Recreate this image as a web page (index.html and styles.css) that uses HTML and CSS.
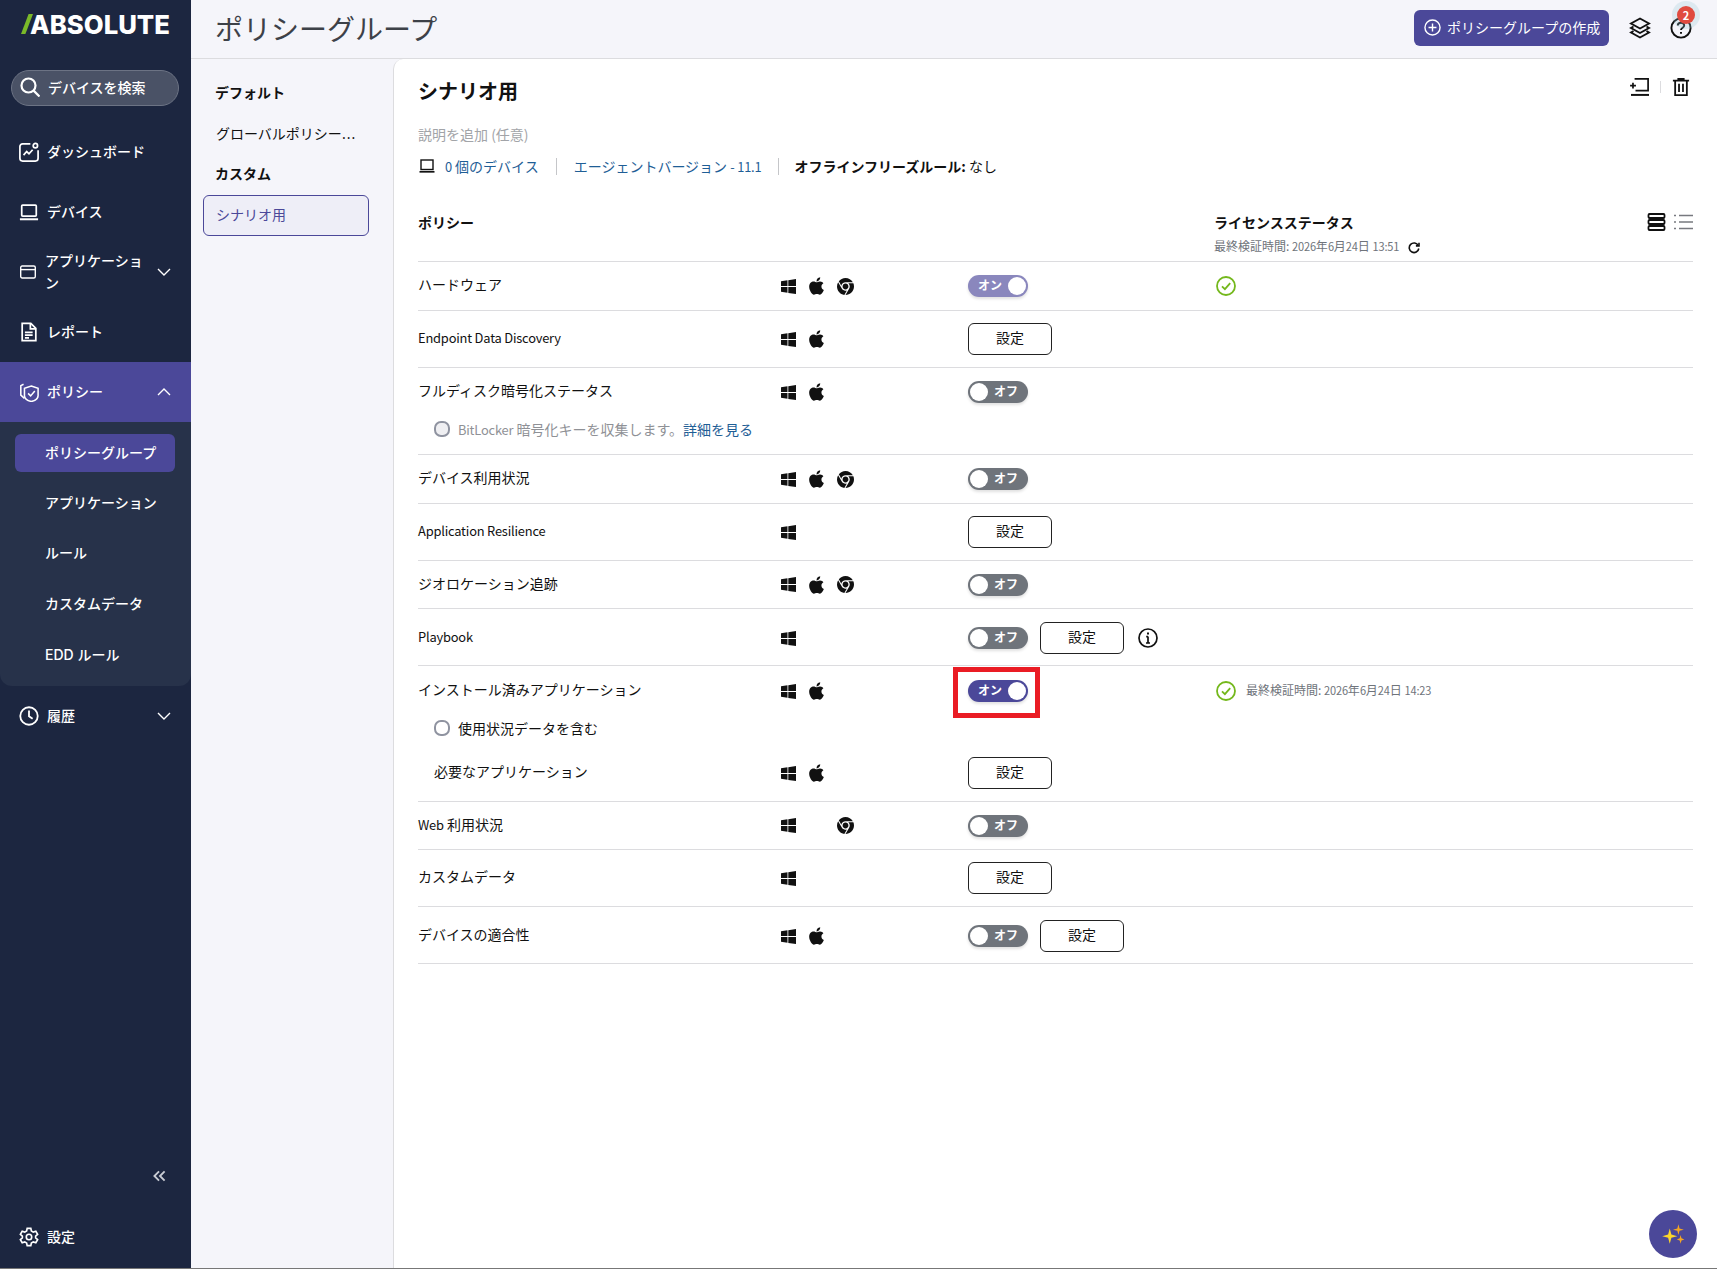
FILE: index.html
```html
<!DOCTYPE html>
<html lang="ja">
  <head>
    <meta charset="UTF-8" />
    <meta name="viewport" content="width=device-width, initial-scale=1.0" />
    <title>ポリシーグループ</title>
    <link rel="stylesheet" href="styles.css">
  </head>
  <body>
    <!-- Shared icons -->
    <svg class="icon-defs" xmlns="http://www.w3.org/2000/svg">
      <symbol id="i-win" viewBox="0 0 16 16">
        <path fill="currentColor" d="M0 2.3 6.9 1.3V7.5H0ZM7.8 1.2 16 0V7.5H7.8ZM0 8.5H6.9V14.7L0 13.7ZM7.8 8.5H16V16L7.8 14.8Z"/>
      </symbol>
      <symbol id="i-apple" viewBox="0 0 384 512">
        <path fill="currentColor" d="M318.7 268.7c-.2-36.7 16.4-64.4 50-84.8-18.8-26.9-47.2-41.7-84.7-44.6-35.5-2.8-74.3 20.7-88.5 20.7-15 0-49.4-19.7-76.4-19.7C63.3 141.2 4 184.8 4 273.5q0 39.3 14.4 81.2c12.8 36.7 59 126.7 107.2 125.2 25.2-.6 43-17.9 75.8-17.9 31.8 0 48.3 17.9 76.4 17.9 48.6-.7 90.4-82.5 102.6-119.3-65.2-30.7-61.7-90-61.7-91.9zm-56.6-164.2c27.3-32.4 24.8-61.9 24-72.5-24.1 1.4-52 16.4-67.9 34.9-17.5 19.8-27.8 44.3-25.6 71.9 26.1 2 49.9-11.4 69.5-34.3z"/>
      </symbol>
      <symbol id="i-chrome" viewBox="0 0 512 512">
        <path fill="currentColor" d="M0 256C0 209.4 12.47 165.6 34.27 127.1L144.1 318.3C166 357.5 207.9 384 256 384C270.3 384 283.1 381.7 296.8 377.4L220.5 509.6C95.9 492.3 0 385.3 0 256zM365.1 321.6C377.4 302.4 384 279.1 384 256C384 217.8 367.2 183.5 340.7 160H493.4C505.4 189.6 512 222.1 512 256C512 397.4 397.4 511.1 256 512L365.1 321.6zM477.8 128H256C193.1 128 142.3 172.1 130.5 230.7L54.19 98.47C101 38.53 174 0 256 0C350.8 0 433.5 51.48 477.8 128V128zM168 256C168 207.4 207.4 168 256 168C304.6 168 344 207.4 344 256C344 304.6 304.6 344 256 344C207.4 344 168 304.6 168 256z"/>
      </symbol>
      <symbol id="i-check" viewBox="0 0 20 20">
        <circle cx="10" cy="10" r="9" fill="none" stroke="currentColor" stroke-width="1.8"/>
        <path d="M6 10.4 8.9 13.2 14.2 7.2" fill="none" stroke="currentColor" stroke-width="1.8"/>
      </symbol>
      <symbol id="i-chev-down" viewBox="0 0 14 8">
        <path d="M1 1 7 7 13 1" fill="none" stroke="currentColor" stroke-width="1.4"/>
      </symbol>
      <symbol id="i-chev-up" viewBox="0 0 14 8">
        <path d="M1 7 7 1 13 7" fill="none" stroke="currentColor" stroke-width="1.4"/>
      </symbol>
    </svg>

    <div class="app">
      <!-- Sidebar -->
      <aside class="sidebar">
        <div class="logo">
          <svg class="logo-slash" viewBox="0 0 12 20"><path fill="#7ab929" d="M7.6 0H12L4.4 20H0Z"/></svg>
          <span>ABSOLUTE</span>
        </div>

        <div class="search">
          <svg class="nav-icon-sm" viewBox="0 0 20 20" fill="none" stroke="currentColor" stroke-width="2.2"><circle cx="8.5" cy="8.5" r="7"/><path d="M13.6 13.6 19.5 19.5"/></svg>
          <span>デバイスを検索</span>
        </div>

        <nav class="nav">
          <div class="nav-item">
            <svg class="nav-icon" viewBox="0 0 22 22" fill="none" stroke="currentColor" stroke-width="1.9"><path d="M12.5 2H4a3 3 0 0 0-3 3v13a3 3 0 0 0 3 3h14a3 3 0 0 0 3-3V9"/><circle cx="18" cy="4" r="2.4"/><path d="M5 14.5 8.5 10.5 11 13 15 8.5"/></svg>
            <span>ダッシュボード</span>
          </div>
          <div class="nav-item">
            <svg class="nav-icon" viewBox="0 0 22 22" fill="none" stroke="currentColor" stroke-width="1.9"><rect x="3" y="3.5" width="16" height="12" rx="1"/><path d="M1 19H21" stroke-width="2.2"/></svg>
            <span>デバイス</span>
          </div>
          <div class="nav-item">
            <svg class="nav-icon nav-icon-app" viewBox="0 0 16 14" fill="none" stroke="currentColor" stroke-width="1.4"><rect x=".7" y="1" width="14.6" height="12" rx="1.5"/><path d="M1 4.6H15"/></svg>
            <span class="nav-label-wrap">アプリケーション</span>
            <svg class="chev"><use href="#i-chev-down"/></svg>
          </div>
          <div class="nav-item">
            <svg class="nav-icon" viewBox="0 0 22 22" fill="none" stroke="currentColor" stroke-width="1.9"><path d="M3.5 1.5H13L18.5 7V20.5H3.5Z"/><path d="M12.5 2V7.5H18M6.5 11.5H15M6.5 14.5H15M6.5 17.5H11"/></svg>
            <span>レポート</span>
          </div>
          <div class="nav-item nav-item-active">
            <svg class="nav-icon" viewBox="0 0 22 22" fill="none" stroke="currentColor" stroke-width="1.7"><path d="M5 2.5 2 4V14.5L6 18"/><path d="M13.5 4.5 21 7V15C21 18 17 20.5 13.5 21.5 10 20.5 6 18 6 15V7Z"/><path d="M10 12.5 12.8 15.3 17.4 10"/></svg>
            <span>ポリシー</span>
            <svg class="chev"><use href="#i-chev-up"/></svg>
          </div>
          <div class="subnav">
            <div class="subnav-item subnav-item-active">ポリシーグループ</div>
            <div class="subnav-item">アプリケーション</div>
            <div class="subnav-item">ルール</div>
            <div class="subnav-item">カスタムデータ</div>
            <div class="subnav-item">EDD ルール</div>
          </div>
          <div class="nav-item">
            <svg class="nav-icon" viewBox="0 0 22 22" fill="none" stroke="currentColor" stroke-width="2"><circle cx="11" cy="11" r="9.6"/><path d="M11 5V11.3L15 14"/></svg>
            <span>履歴</span>
            <svg class="chev"><use href="#i-chev-down"/></svg>
          </div>
        </nav>

        <div class="collapse">
          <svg viewBox="0 0 14 12" fill="none" stroke="currentColor" stroke-width="2"><path d="M6.5 1 1.5 6 6.5 11M12.5 1 7.5 6 12.5 11"/></svg>
        </div>
        <div class="nav-item nav-item-settings">
          <svg class="nav-icon" viewBox="0 0 22 22" fill="none" stroke="currentColor" stroke-width="1.8"><circle cx="11" cy="11" r="3"/><path d="M9 1.5H13L13.6 4.4 15.7 5.6 18.5 4.7 20.5 8.1 18.3 10V12L20.5 13.9 18.5 17.3 15.7 16.4 13.6 17.6 13 20.5H9L8.4 17.6 6.3 16.4 3.5 17.3 1.5 13.9 3.7 12V10L1.5 8.1 3.5 4.7 6.3 5.6 8.4 4.4Z"/></svg>
          <span>設定</span>
        </div>
      </aside>

      <div class="main">
        <!-- Top bar -->
        <header class="topbar">
          <h1>ポリシーグループ</h1>
          <div class="top-actions">
            <button class="btn-create">
              <svg viewBox="0 0 18 18" fill="none" stroke="currentColor" stroke-width="1.5"><circle cx="9" cy="9" r="8"/><path d="M9 4.8V13.2M4.8 9H13.2"/></svg>
              ポリシーグループの作成
            </button>
            <svg class="top-icon" viewBox="0 0 22 22" fill="none" stroke="#111" stroke-width="1.9"><path d="M11 1.5 20 6.5 11 11.5 2 6.5Z"/><path d="M4.5 9.5 2 11 11 16 20 11 17.5 9.5"/><path d="M4.5 14 2 15.5 11 20.5 20 15.5 17.5 14"/></svg>
            <div class="help">
              <svg class="top-icon" viewBox="0 0 22 22" fill="none" stroke="#111" stroke-width="1.9"><circle cx="11" cy="11" r="9.6"/><path d="M7.8 8.6C7.8 6.8 9.3 5.8 11 5.8S14.2 6.9 14.2 8.5C14.2 10.6 11 10.8 11 13"/><path d="M11 15V16.8" stroke-width="2"/></svg>
              <span class="badge">2</span>
            </div>
          </div>
        </header>

        <div class="content">
          <!-- Group list -->
          <div class="groups">
            <div class="group-title">デフォルト</div>
            <div class="group-item">グローバルポリシー<span class="latin-dots">...</span></div>
            <div class="group-title">カスタム</div>
            <div class="group-item group-item-active">シナリオ用</div>
          </div>

          <!-- Policy panel -->
          <section class="panel">
            <div class="panel-head">
              <h2>シナリオ用</h2>
              <div class="panel-actions">
                <svg viewBox="0 0 22 20" fill="none" stroke="#111" stroke-width="1.9"><path d="M5 1H20V14H6"/><path d="M1 18.8H21" stroke-width="2.2"/><path d="M0 8.5H6.5M3.2 5.2V11.8"/></svg>
                <span class="action-sep"></span>
                <svg viewBox="0 0 18 20" fill="none" stroke="#111" stroke-width="2"><path d="M0 3H18M6 3V.9H12V3"/><path d="M2.5 3V19H15.5V3"/><path d="M6.8 6.5V15.5M11.2 6.5V15.5" stroke-width="2"/></svg>
              </div>
            </div>
            <p class="desc">説明を追加 (任意)</p>
            <div class="meta">
              <svg class="meta-icon" viewBox="0 0 16 14" fill="none" stroke="#111" stroke-width="1.4"><rect x="2" y="1" width="12" height="9.5"/><path d="M.5 12.8H15.5" stroke-width="1.7"/></svg>
              <a class="meta-link"><span class="latin">0</span> 個のデバイス</a>
              <span class="meta-sep"></span>
              <a class="meta-link">エージェントバージョン <span class="latin">- 11.1</span></a>
              <span class="meta-sep"></span>
              <span><b>オフラインフリーズルール:</b> なし</span>
            </div>

            <div class="policy-head">
              <div class="policy-head-name">ポリシー</div>
              <div class="policy-head-status">
                <div class="policy-head-title">ライセンスステータス</div>
                <div class="verified">
                  最終検証時間: <span class="latin">2026</span>年<span class="latin">6</span>月<span class="latin">24</span>日 <span class="latin">13:51</span>
                  <svg class="refresh" viewBox="0 0 12 12" fill="none" stroke="#111" stroke-width="1.6"><path d="M10.3 3.5A4.8 4.8 0 1 0 10.8 6.5"/><path d="M11 .8V3.9H7.9" /></svg>
                </div>
              </div>
              <div class="density">
                <svg viewBox="0 0 18 18" fill="none" stroke="#111" stroke-width="1.8"><rect x="1" y="1" width="16" height="4" rx="1"/><rect x="1" y="7" width="16" height="4" rx="1"/><rect x="1" y="13" width="16" height="4" rx="1"/></svg>
                <svg viewBox="0 0 19 18" fill="none" stroke="#77797f" stroke-width="1.5"><path d="M5 2.5H19M5 9H19M5 15.5H19M0 2.5H2M0 9H2M0 15.5H2"/></svg>
              </div>
            </div>

            <div class="row">
              <div class="line">
                <div>ハードウェア</div>
                <div class="os"><svg class="os-win"><use href="#i-win"/></svg><svg class="os-apple"><use href="#i-apple"/></svg><svg class="os-chrome"><use href="#i-chrome"/></svg></div>
                <div class="controls"><span class="toggle toggle-on toggle-dim">オン</span></div>
                <div class="status"><svg class="ok"><use href="#i-check"/></svg></div>
              </div>
            </div>

            <div class="row">
              <div class="line line-btn">
                <div class="latin">Endpoint Data Discovery</div>
                <div class="os"><svg class="os-win"><use href="#i-win"/></svg><svg class="os-apple"><use href="#i-apple"/></svg></div>
                <div class="controls"><button class="btn">設定</button></div>
              </div>
            </div>

            <div class="row">
              <div class="line">
                <div>フルディスク暗号化ステータス</div>
                <div class="os"><svg class="os-win"><use href="#i-win"/></svg><svg class="os-apple"><use href="#i-apple"/></svg></div>
                <div class="controls"><span class="toggle toggle-off">オフ</span></div>
              </div>
              <label class="check check-bitlocker">
                <span class="check-box check-box-dim"></span>
                <span class="check-dim"><span class="latin">BitLocker</span> 暗号化キーを収集します。<a class="meta-link">詳細を見る</a></span>
              </label>
            </div>

            <div class="row">
              <div class="line">
                <div>デバイス利用状況</div>
                <div class="os"><svg class="os-win"><use href="#i-win"/></svg><svg class="os-apple"><use href="#i-apple"/></svg><svg class="os-chrome"><use href="#i-chrome"/></svg></div>
                <div class="controls"><span class="toggle toggle-off">オフ</span></div>
              </div>
            </div>

            <div class="row">
              <div class="line line-btn">
                <div class="latin">Application Resilience</div>
                <div class="os"><svg class="os-win"><use href="#i-win"/></svg></div>
                <div class="controls"><button class="btn">設定</button></div>
              </div>
            </div>

            <div class="row">
              <div class="line line-short">
                <div>ジオロケーション追跡</div>
                <div class="os"><svg class="os-win"><use href="#i-win"/></svg><svg class="os-apple"><use href="#i-apple"/></svg><svg class="os-chrome"><use href="#i-chrome"/></svg></div>
                <div class="controls"><span class="toggle toggle-off">オフ</span></div>
              </div>
            </div>

            <div class="row">
              <div class="line line-btn line-low">
                <div class="latin">Playbook</div>
                <div class="os"><svg class="os-win"><use href="#i-win"/></svg></div>
                <div class="controls">
                  <span class="toggle toggle-off">オフ</span>
                  <button class="btn">設定</button>
                  <svg class="info" viewBox="0 0 20 20" fill="none" stroke="#111" stroke-width="1.7"><circle cx="10" cy="10" r="9"/><path d="M10 8.5V15M8 15H12M8.2 8.7H10"/><path d="M10 4.6V6.4" stroke-width="2"/></svg>
                </div>
              </div>
            </div>

            <div class="row">
              <div class="line line-low">
                <div>インストール済みアプリケーション</div>
                <div class="os"><svg class="os-win"><use href="#i-win"/></svg><svg class="os-apple"><use href="#i-apple"/></svg></div>
                <div class="controls"><span class="toggle toggle-on marked">オン</span></div>
                <div class="status">
                  <svg class="ok"><use href="#i-check"/></svg>
                  <span class="verified">最終検証時間: <span class="latin">2026</span>年<span class="latin">6</span>月<span class="latin">24</span>日 <span class="latin">14:23</span></span>
                </div>
              </div>
              <label class="check check-usage">
                <span class="check-box"></span>
                <span>使用状況データを含む</span>
              </label>
              <div class="line line-btn line-sub">
                <div class="sub-name">必要なアプリケーション</div>
                <div class="os"><svg class="os-win"><use href="#i-win"/></svg><svg class="os-apple"><use href="#i-apple"/></svg></div>
                <div class="controls"><button class="btn">設定</button></div>
              </div>
            </div>

            <div class="row">
              <div class="line line-short">
                <div><span class="latin">Web</span> 利用状況</div>
                <div class="os"><svg class="os-win"><use href="#i-win"/></svg><span class="os-apple"></span><svg class="os-chrome"><use href="#i-chrome"/></svg></div>
                <div class="controls"><span class="toggle toggle-off">オフ</span></div>
              </div>
            </div>

            <div class="row">
              <div class="line line-btn">
                <div>カスタムデータ</div>
                <div class="os"><svg class="os-win"><use href="#i-win"/></svg></div>
                <div class="controls"><button class="btn">設定</button></div>
              </div>
            </div>

            <div class="row">
              <div class="line line-btn line-low">
                <div>デバイスの適合性</div>
                <div class="os"><svg class="os-win"><use href="#i-win"/></svg><svg class="os-apple"><use href="#i-apple"/></svg></div>
                <div class="controls">
                  <span class="toggle toggle-off">オフ</span>
                  <button class="btn">設定</button>
                </div>
              </div>
            </div>
          </section>
        </div>
      </div>
    </div>

    <button class="fab" aria-label="AI">
      <svg viewBox="0 0 24 24"><path fill="#fcd62a" d="M9 7 10.5 12.5 16 14 10.5 15.5 9 21 7.5 15.5 2 14 7.5 12.5Z"/><path fill="#f5a623" d="M17 3 18 7 22 8 18 9 17 13 16 9 12 8 16 7ZM19 13 19.8 16 22.5 17 19.8 18 19 21 18.2 18 15.5 17 18.2 16Z"/></svg>
    </button>
  </body>
</html>
```

FILE: styles.css
```css
:root {
  --navy: #1c2640;
  --navy-light: #27324a;
  --purple: #4b4899;
  --purple-dim: #8a87bd;
  --grey: #6f747b;
  --line: #dcdcdf;
  --page-bg: #f5f5fa;
  --link: #1f5e96;
}

* {
  box-sizing: border-box;
}

body {
  margin: 0;
  height: 1269px;
  overflow: hidden;
  background: #fff;
  border-bottom: 1px solid #777;
  font-family: "Noto Sans CJK JP", "Noto Sans", sans-serif;
  font-size: 14px;
  color: #111;
}

.icon-defs {
  display: none;
}

/* latin text and digits run narrower than the CJK font's own */
.latin {
  font-size: 0.92em;
  letter-spacing: -0.015em;
}

.latin-dots {
  font-family: "Noto Sans", sans-serif;
  letter-spacing: 1px;
}

.app {
  display: flex;
  height: 100%;
}

/* Sidebar */
.sidebar {
  width: 191px;
  flex-shrink: 0;
  display: flex;
  flex-direction: column;
  background: var(--navy);
  color: #fff;
  font-family: Inter, "Noto Sans CJK JP", sans-serif;
  font-weight: 500;
}

.logo {
  display: flex;
  align-items: center;
  height: 48px;
  padding-left: 21px;
  font-family: Inter, sans-serif;
  font-size: 25.7px;
  font-weight: 800;
}

.logo-slash {
  width: 12px;
  height: 20px;
  margin-right: -3px;
}

.search {
  display: flex;
  align-items: center;
  gap: 8px;
  height: 36px;
  margin: 22px 12px 16px 11px;
  padding: 0 0 2px 8px;
  background: #4a5266;
  border: 1px solid #6c7384;
  border-radius: 18px;
}

.nav-icon-sm {
  width: 20px;
  height: 20px;
}

.nav {
  display: flex;
  flex-direction: column;
}

.nav-item {
  display: flex;
  align-items: center;
  height: 60px;
  padding: 0 20px 0 19px;
}

.nav-item > span {
  margin-left: 8px;
  padding-bottom: 2px;
  flex: 1;
}

.nav-icon {
  width: 20px;
  height: 20px;
  flex-shrink: 0;
}

.nav-icon-app {
  width: 16px;
  height: 14px;
  margin: 0 2px 0 1px;
}

.nav-item .nav-label-wrap {
  margin-left: 7px;
  padding-bottom: 0;
  line-height: 22px;
  width: 100px;
  flex: none;
}

.chev {
  width: 14px;
  height: 8px;
  margin-left: auto;
}

.nav-item-active {
  background: var(--purple);
}

.subnav {
  height: 264px;
  padding-top: 12px;
  background: var(--navy-light);
  border-radius: 0 0 12px 12px;
}

.subnav-item {
  height: 38px;
  line-height: 37px;
  margin: 0 16px 12.2px 15px;
  padding-left: 30px;
  border-radius: 6px;
}

.subnav-item:last-child {
  margin-top: 13.7px;
}

.subnav-item-active {
  background: var(--purple);
}

.collapse {
  margin-top: auto;
  padding-left: 153px;
  height: 13px;
}

.collapse svg {
  width: 13px;
  height: 12px;
  color: #c9ccd4;
  display: block;
}

.nav-item-settings {
  margin-top: 24px;
  margin-bottom: 1px;
}

/* Top bar */
.main {
  flex: 1;
  display: flex;
  flex-direction: column;
  background: var(--page-bg);
  min-width: 0;
}

.topbar {
  height: 59px;
  flex-shrink: 0;
  display: flex;
  justify-content: space-between;
  align-items: flex-start;
  padding: 0 25px 0 24px;
  border-bottom: 1px solid var(--line);
}

h1 {
  margin: 7px 0 0;
  font-size: 28px;
  font-weight: 400;
  line-height: 42px;
  color: #3d4148;
}

.top-actions {
  display: flex;
  align-items: center;
  gap: 19px;
  padding-top: 10px;
}

.btn-create {
  display: flex;
  align-items: center;
  gap: 6px;
  width: 195px;
  height: 36px;
  margin-right: 1px;
  padding: 0 0 2px 10px;
  background: var(--purple);
  border: 0;
  border-radius: 6px;
  color: #fff;
  font-family: inherit;
  font-size: 14px;
}

.btn-create svg {
  width: 17px;
  height: 17px;
}

.top-icon {
  width: 22px;
  height: 22px;
  display: block;
}

.help {
  position: relative;
  width: 22px;
}

.badge {
  position: absolute;
  top: -11px;
  left: 7px;
  width: 18px;
  height: 18px;
  line-height: 18px;
  border-radius: 50%;
  background: #e04b3f;
  box-shadow: 0 0 0 5px rgba(150, 200, 210, 0.25);
  color: #fff;
  font-size: 11px;
  font-weight: 700;
  text-align: center;
}

.content {
  flex: 1;
  display: flex;
  min-height: 0;
}

/* Group list */
.groups {
  width: 202px;
  flex-shrink: 0;
  padding: 20px 24px 0 12px;
}

.group-title {
  height: 26px;
  line-height: 26px;
  margin: 0 0 15px 12px;
  font-weight: 700;
}

.group-item {
  height: 26px;
  line-height: 26px;
  margin: 0 0 14px 13px;
  white-space: nowrap;
}

.group-item-active {
  height: 41px;
  line-height: 37px;
  margin: -6px 0 0;
  padding-left: 12px;
  background: #eeeef7;
  border: 1px solid var(--purple);
  border-radius: 6px;
  color: var(--purple);
}

/* Policy panel */
.panel {
  flex: 1;
  padding: 0 24px 0 24px;
  background: #fff;
  border-left: 1px solid var(--line);
  border-top-left-radius: 10px;
}

.panel-head {
  display: flex;
  justify-content: space-between;
  align-items: flex-start;
  height: 58px;
  padding-top: 17px;
}

h2 {
  margin: 0;
  font-size: 20px;
  font-weight: 700;
  line-height: 30px;
}

.panel-actions {
  display: flex;
  align-items: center;
  gap: 10px;
  padding: 2px 2px 0 0;
}

.panel-actions svg {
  width: 20px;
  height: 18px;
}

.action-sep {
  width: 1px;
  height: 12px;
  background: var(--line);
}

.desc {
  margin: 6px 0 0;
  line-height: 22px;
  color: #a2a4a8;
}

.meta {
  display: flex;
  align-items: center;
  height: 22px;
  margin-top: 10px;
}

.meta-icon {
  width: 16px;
  height: 14px;
  margin-right: 10px;
  margin-left: 1px;
}

.meta-link {
  color: var(--link);
}

.meta-sep {
  width: 1px;
  height: 17px;
  margin: 0 17px;
  background: #c5c6c9;
}

.meta-sep + span {
  margin-left: -2px;
}

.policy-head {
  display: grid;
  grid-template-columns: 796px 1fr auto;
  height: 85px;
  padding-top: 34px;
  border-bottom: 1px solid var(--line);
}

.policy-head-name,
.policy-head-title {
  font-weight: 700;
  line-height: 22px;
}

.verified {
  font-size: 12px;
  color: var(--grey);
  line-height: 20px;
  margin-top: 3px;
}

.refresh {
  width: 12px;
  height: 12px;
  margin-left: 6px;
  vertical-align: -3px;
}

.density {
  display: flex;
  gap: 8px;
  padding-top: 2px;
}

.density svg {
  width: 19px;
  height: 18px;
}

/* Policy rows */
.row {
  border-bottom: 1px solid var(--line);
}

.line {
  display: grid;
  grid-template-columns: 363px 187px 246px 1fr;
  align-items: center;
  min-height: 48px;
}

.line > :first-child {
  padding-bottom: 4px;
}

.line-btn {
  min-height: 56px;
}

.line-short {
  min-height: 47px;
}

.line-low {
  padding-top: 2px;
}

.os {
  display: flex;
  align-items: center;
  gap: 13px;
  height: 20px;
}

.os-win {
  width: 15px;
  height: 15px;
}

.os-apple {
  width: 15px;
  height: 20px;
}

.os-chrome {
  width: 17px;
  height: 17px;
}

.controls {
  display: flex;
  align-items: center;
  gap: 12px;
}

.toggle {
  position: relative;
  display: block;
  width: 60px;
  height: 22px;
  line-height: 19px;
  border-radius: 11px;
  color: #fff;
  font-size: 12px;
  font-weight: 700;
  box-shadow: 0 2px 3px rgba(0, 0, 0, 0.12);
}

.toggle::before {
  content: "";
  position: absolute;
  top: 2px;
  width: 18px;
  height: 18px;
  border-radius: 50%;
  background: #fff;
}

.toggle-on {
  padding-left: 10px;
  background: var(--purple);
}

.toggle-on::before {
  right: 2px;
}

.toggle-dim {
  background: var(--purple-dim);
}

.toggle-off {
  padding-left: 26px;
  background: var(--grey);
}

.toggle-off::before {
  left: 2px;
}

/* red box the screenshot's author drew round the toggle */
.marked::after {
  content: "";
  position: absolute;
  box-sizing: border-box;
  top: -13px;
  left: -15px;
  width: 87px;
  height: 51px;
  border: 5px solid #ea1c24;
}

.btn {
  width: 84px;
  height: 32px;
  padding: 0 0 4px;
  background: #fff;
  border: 1px solid #222;
  border-radius: 6px;
  color: #111;
  font-family: inherit;
  font-size: 14px;
}

.info {
  width: 20px;
  height: 20px;
  margin-left: 2px;
}

.status {
  display: flex;
  align-items: center;
  gap: 10px;
  padding-left: 2px;
}

.status .verified {
  margin: 0 0 2px;
}

.ok {
  width: 20px;
  height: 20px;
  color: #74b81c;
}

.check {
  display: flex;
  align-items: center;
  gap: 8px;
  height: 26px;
  margin-left: 16px;
}

.check-bitlocker {
  margin-bottom: 12px;
}

.check-usage {
  margin-top: 1px;
}

.check-box {
  width: 16px;
  height: 16px;
  border: 2px solid #8f93a0;
  border-radius: 7px;
}

.check-box-dim {
  background: #efeff2;
}

.check-dim {
  color: #8f9196;
}

.line-sub {
  margin-top: 4px;
}

.sub-name {
  padding-left: 16px;
}

.fab {
  position: absolute;
  left: 1649px;
  top: 1210px;
  width: 48px;
  height: 48px;
  padding: 11px;
  border: 0;
  border-radius: 50%;
  background: var(--purple);
}

.fab svg {
  display: block;
}
```
